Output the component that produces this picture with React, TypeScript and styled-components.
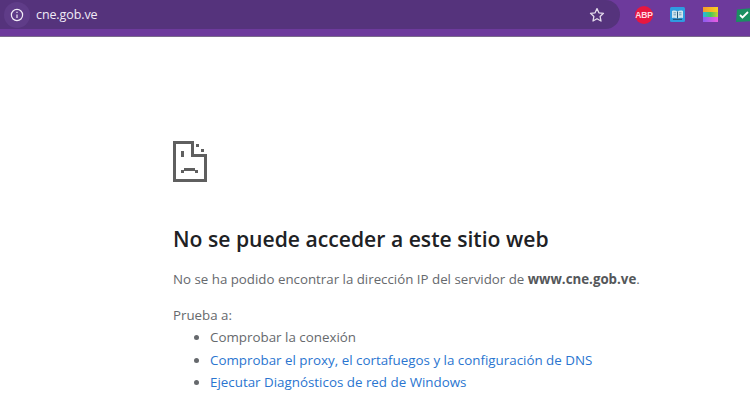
import React from "react";
import styled, {createGlobalStyle} from "styled-components";

const GlobalStyle = createGlobalStyle`
  html, body {
    margin: 0;
    padding: 0;
    width: 750px;
    height: 400px;
    overflow: hidden;
    background: #ffffff;
    font-family: "Open Sans", "Noto Sans", sans-serif;
  }
`;

const Toolbar = styled.div`
  height: 37px;
  box-sizing: border-box;
  background: #6d3a9c;
  border-bottom: 1px solid #7a6a8c;
  display: flex;
  align-items: flex-start;
  overflow: hidden;
`;

const Omnibox = styled.div`
  width: 620px;
  height: 29px;
  flex-shrink: 0;
  background: #55337c;
  border-radius: 0 15px 15px 0;
  display: flex;
  align-items: center;
  box-sizing: border-box;
  padding: 0 15px 0 4px;
`;

const InfoBadge = styled.div`
  width: 26px;
  height: 26px;
  border-radius: 50%;
  background: #5f3c88;
  display: flex;
  align-items: center;
  justify-content: center;
  margin-right: 6px;
`;

const Url = styled.span`
  flex: 1;
  color: #f0eaf6;
  font-size: 12.5px;
  letter-spacing: -0.1px;
`;

const Extensions = styled.div`
  display: flex;
  align-items: center;
  height: 29px;
  margin-left: 15px;
  gap: 15px;
`;

const ExtensionIcon = styled.div`
  width: 18px;
  height: 18px;
  flex-shrink: 0;
  display: flex;
  align-items: center;
  justify-content: center;
`;

const AbpText = styled.span`
  color: #ffdbe2;
  font-family: "Liberation Sans", sans-serif;
  font-weight: 700;
  font-size: 8.5px;
  letter-spacing: -0.2px;
`;

const AbpBadge = styled(ExtensionIcon)`
  background: #e8173f;
  border-radius: 50%;
`;

const Main = styled.main`
  padding: 104px 0 0 173px;
  width: 480px;
`;

const Heading = styled.h1`
  margin: 37px 0 0;
  font-size: 21.15px;
  line-height: 30px;
  font-weight: 600;
  color: #202124;
  white-space: nowrap;
`;

const Summary = styled.p`
  margin: 15px 0 0;
  font-size: 13.3px;
  line-height: 20px;
  color: #66696d;
  white-space: nowrap;

  strong {
    font-weight: 700;
    color: #54575a;
  }
`;

const TryLabel = styled.p`
  margin: 16px 0 0;
  font-size: 13.3px;
  line-height: 20px;
  color: #66696d;
`;

const Suggestions = styled.ul`
  margin: 1px 0 0;
  padding: 0 0 0 37px;
  font-size: 13.36px;
  line-height: 22.5px;
  color: #66696d;
  white-space: nowrap;
`;

const SuggestionLink = styled.a`
  color: #2a75d0;
  text-decoration: none;
`;

function InfoIcon() {
    return (
        <svg width="14" height="14" viewBox="0 0 14 14" fill="none" stroke="#f3eef8" strokeWidth="1.2">
            <circle cx="7" cy="7" r="5.6"/>
            <path d="M7 6.4v3.6M7 3.8v1.3"/>
        </svg>
    )
}

function StarIcon() {
    return (
        <svg width="16" height="16" viewBox="0 0 16 16" fill="none" stroke="#e4dcec" strokeWidth="1.3">
            <path d="M8 1.6l1.9 4.2 4.6.5-3.4 3.1.9 4.6L8 11.7l-4 2.3.9-4.6L1.5 6.3l4.6-.5z" strokeLinejoin="round"/>
        </svg>
    )
}

function ReaderIcon() {
    return (
        <svg width="15" height="15" viewBox="0 0 15 15">
            <rect width="15" height="15" rx="1.5" fill="#2f9be0"/>
            <path d="M2 4c2-.7 4-.5 5.500.5C9 3.500 11 3.300 13 4v7c-2-.5-4-.3-5.500.6C6 10.700 4 10.500 2 11z" fill="#cfe6ee"/>
            <path d="M7.500 4.500v7" stroke="#24597c" strokeWidth="1"/>
            <path d="M3.500 5.800h2.500M3.500 7.800h2.500M9 5.800h2.500M9 7.800h2.500" stroke="#6d9cb8" strokeWidth="1"/>
            <path d="M3 12.300h9" stroke="#1d4a68" strokeWidth="1"/>
        </svg>
    )
}

function PaletteIcon() {
    return (
        <svg width="15" height="15" viewBox="0 0 15 15">
            <defs>
                <linearGradient id="bandTop"><stop offset="0" stopColor="#f59a2c"/><stop offset="1" stopColor="#f7d21f"/></linearGradient>
                <linearGradient id="bandMiddle"><stop offset="0" stopColor="#29b6e8"/><stop offset="0.5" stopColor="#43c95c"/><stop offset="1" stopColor="#c9d12c"/></linearGradient>
                <linearGradient id="bandBottom"><stop offset="0" stopColor="#8a5cf0"/><stop offset="1" stopColor="#ec5ce0"/></linearGradient>
            </defs>
            <rect width="15" height="5" fill="url(#bandTop)"/>
            <rect y="5" width="15" height="5" fill="url(#bandMiddle)"/>
            <rect y="10" width="15" height="5" fill="url(#bandBottom)"/>
        </svg>
    )
}

function CheckIcon() {
    return (
        <svg width="18" height="14" viewBox="0 0 18 14">
            <path d="M3 1.500L18 0v13L2 14z" fill="#1a8f62"/>
            <path d="M6 7l2.500 2.500L14 4" fill="none" stroke="#ffffff" strokeWidth="1.800"/>
        </svg>
    )
}

// pixelated sad page from the browser's network error page
function SadPageIcon() {
    return (
        <svg width="34" height="41" viewBox="0 0 34 41" shapeRendering="crispEdges" fill="#5f5f5f">
            <path d="M0 0h21v13h13v28H0zM3 3v35h28V16H18V3z" fillRule="evenodd"/>
            <rect x="23" y="3" width="2.500" height="3"/>
            <rect x="28" y="8" width="2.500" height="3"/>
            <rect x="8" y="10" width="3" height="6"/>
            <rect x="11" y="27" width="11" height="2.500"/>
            <rect x="8" y="29" width="3" height="3"/>
            <rect x="22" y="29" width="3" height="3"/>
        </svg>
    )
}

export default function App() {
    return (
        <>
            <GlobalStyle/>
            <Toolbar>
                <Omnibox>
                    <InfoBadge><InfoIcon/></InfoBadge>
                    <Url>cne.gob.ve</Url>
                    <StarIcon/>
                </Omnibox>
                <Extensions>
                    <AbpBadge><AbpText>ABP</AbpText></AbpBadge>
                    <ExtensionIcon><ReaderIcon/></ExtensionIcon>
                    <ExtensionIcon><PaletteIcon/></ExtensionIcon>
                    <ExtensionIcon><CheckIcon/></ExtensionIcon>
                </Extensions>
            </Toolbar>
            <Main>
                <SadPageIcon/>
                <Heading>No se puede acceder a este sitio web</Heading>
                <Summary>No se ha podido encontrar la dirección IP del servidor de <strong>www.cne.gob.ve</strong>.</Summary>
                <TryLabel>Prueba a:</TryLabel>
                <Suggestions>
                    <li>Comprobar la conexión</li>
                    <li><SuggestionLink href="#">Comprobar el proxy, el cortafuegos y la configuración de DNS</SuggestionLink></li>
                    <li><SuggestionLink href="#">Ejecutar Diagnósticos de red de Windows</SuggestionLink></li>
                </Suggestions>
            </Main>
        </>
    )
}
